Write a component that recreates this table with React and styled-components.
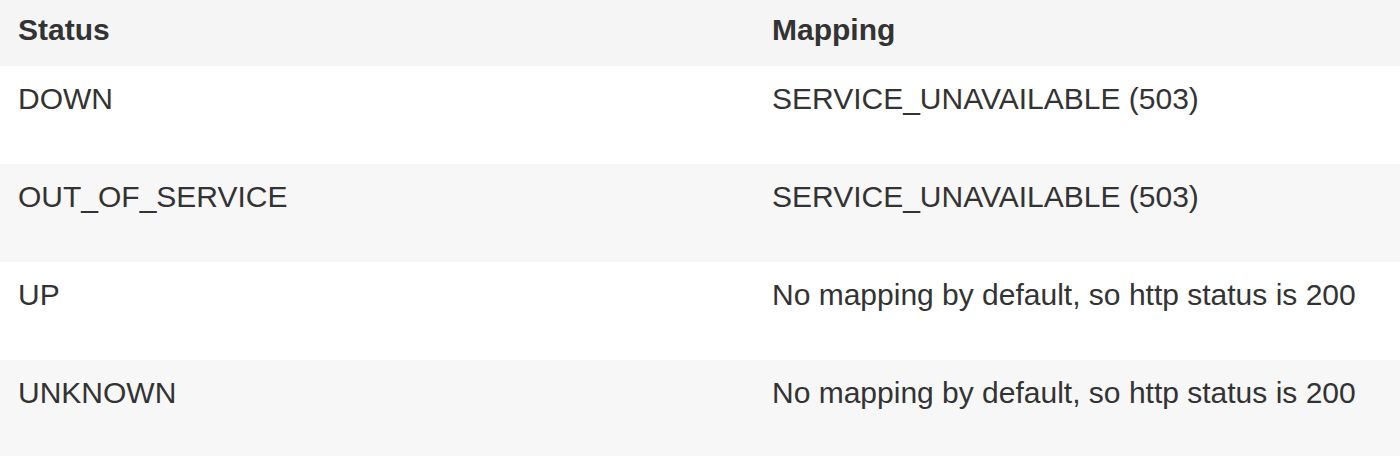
import React from "react";
import styled, { createGlobalStyle } from "styled-components";

const Global = createGlobalStyle`
  html, body { margin: 0; padding: 0; background: #ffffff; }
  body { font-family: "Liberation Sans", Arial, Helvetica, sans-serif; color: #333333; }
`;

const Table = styled.table`
  width: 1400px;
  border-collapse: collapse;
  border-spacing: 0;
  font-family: "Liberation Sans", Arial, Helvetica, sans-serif;
  color: #333333;
`;

const HeadRow = styled.tr`
  background: #f5f5f5;
`;

const HeadCell = styled.th`
  text-align: left;
  font-weight: 700;
  font-size: 30px;
  line-height: 36px;
  padding: 12px 18px 18px;
  width: ${(p) => p.$w || "auto"};
`;

const Row = styled.tr`
  background: ${(p) => (p.$alt ? "#f7f7f7" : "#ffffff")};
`;

const Cell = styled.td`
  font-size: 30px;
  line-height: 36px;
  padding: 15px 18px 47px;
  vertical-align: top;
`;

const rows = [
  ["DOWN", "SERVICE_UNAVAILABLE (503)"],
  ["OUT_OF_SERVICE", "SERVICE_UNAVAILABLE (503)"],
  ["UP", "No mapping by default, so http status is 200"],
  ["UNKNOWN", "No mapping by default, so http status is 200"],
];

export default function App() {
  return (
    <>
      <Global />
      <Table>
        <thead>
          <HeadRow>
            <HeadCell $w="718px">Status</HeadCell>
            <HeadCell>Mapping</HeadCell>
          </HeadRow>
        </thead>
        <tbody>
          {rows.map(([s, m], i) => (
            <Row key={s} $alt={i % 2 === 1}>
              <Cell>{s}</Cell>
              <Cell>{m}</Cell>
            </Row>
          ))}
        </tbody>
      </Table>
    </>
  );
}
